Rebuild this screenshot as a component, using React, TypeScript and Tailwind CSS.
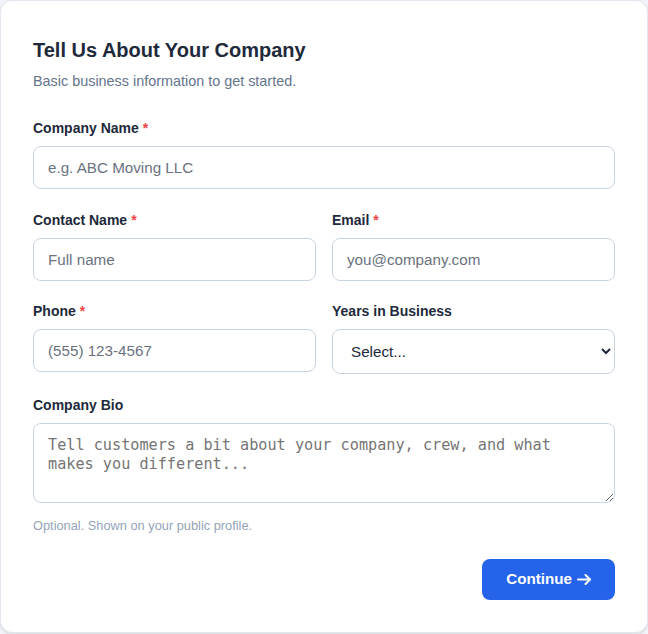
const inputClass =
  "block w-full h-[43px] rounded-lg border border-[#cbd5e1] bg-white px-3.5 text-[15.2px] text-[#1e293b] placeholder:text-[#6b7280] outline-none";

function Label({ text, required }: { text: string; required?: boolean }) {
  return (
    <label className="block mb-2 text-sm leading-5 font-bold text-[#1e293b]">
      {text}
      {required && <span className="ml-1 text-[#ef4444]">*</span>}
    </label>
  );
}

export default function App() {
  return (
    <div className="min-h-screen bg-[#f1f5f9] font-['Liberation_Sans',Arial,sans-serif]">
      <div className="w-[648px] h-[633px] rounded-xl border border-[#e2e8f0] bg-white px-8 pt-8 pb-8 shadow-sm">
        <h2 className="text-xl leading-7 font-bold text-[#1e293b] mt-[3px]">
          Tell Us About Your Company
        </h2>
        <p className="mt-[7px] text-[14.4px] leading-5 text-[#64748b]">
          Basic business information to get started.
        </p>

        <div className="mt-[27px] flex flex-col gap-[21px]">
          <div>
            <Label text="Company Name" required />
            <input className={inputClass} placeholder="e.g. ABC Moving LLC" />
          </div>

          <div className="grid grid-cols-2 gap-4 items-start">
            <div>
              <Label text="Contact Name" required />
              <input className={inputClass} placeholder="Full name" />
            </div>
            <div>
              <Label text="Email" required />
              <input className={inputClass} placeholder="you@company.com" />
            </div>
          </div>

          <div className="grid grid-cols-2 gap-4 items-start -mt-px">
            <div>
              <Label text="Phone" required />
              <input className={inputClass} placeholder="(555) 123-4567" />
            </div>
            <div>
              <Label text="Years in Business" />
              <select className="block w-full h-[45px] rounded-lg border border-[#cbd5e1] bg-white px-3.5 text-[15.2px] text-[#1e293b] outline-none">
                <option>Select...</option>
                <option>Less than 1 year</option>
                <option>1-3 years</option>
                <option>3-5 years</option>
                <option>5-10 years</option>
                <option>10+ years</option>
              </select>
            </div>
          </div>

          <div>
            <Label text="Company Bio" />
            <textarea
              rows={3}
              className="block w-full h-[80px] rounded-lg border border-[#cbd5e1] bg-white px-3.5 py-3 font-['DejaVu_Sans_Mono',monospace] text-[15.2px] leading-[19px] text-[#1e293b] placeholder:text-[#757575] outline-none"
              placeholder="Tell customers a bit about your company, crew, and what makes you different..."
            />
            <p className="mt-[15px] text-[12.8px] leading-4 text-[#94a3b8]">
              Optional. Shown on your public profile.
            </p>
          </div>
        </div>

        <div className="mt-[25px] flex justify-end">
          <button className="flex h-[41px] items-center gap-[5px] rounded-lg bg-[#2563eb] px-6 text-[15.2px] font-bold text-white">
            Continue
            <svg width="14" height="11" viewBox="0 0 14 11" fill="none" stroke="currentColor" strokeWidth="2" strokeLinecap="round" strokeLinejoin="round">
              <path d="M1 5.5h12" />
              <path d="M8.5 1L13 5.5L8.5 10" />
            </svg>
          </button>
        </div>
      </div>
    </div>
  );
}
